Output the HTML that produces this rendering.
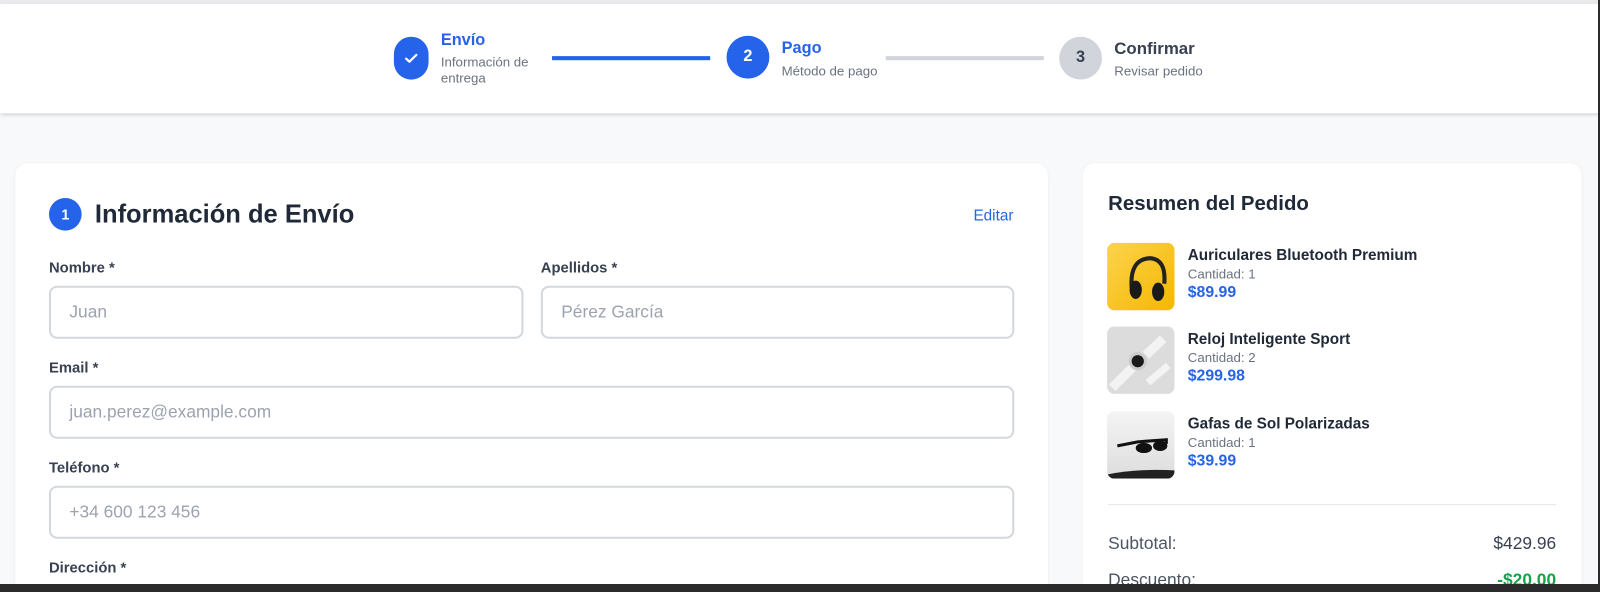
<!DOCTYPE html>
<html><head><meta charset="utf-8"><style>
*{box-sizing:border-box;margin:0;padding:0}
html,body{width:1600px;height:592px;overflow:hidden}
body{background:#f8f9fb;font-family:"Liberation Sans",sans-serif;position:relative;color:#1f2937}
#clip{position:absolute;left:0;top:0;width:1600px;height:592px;overflow:hidden}
#w{position:absolute;left:0;top:0;width:1568px;height:580px;transform:scale(1.0204);transform-origin:0 0;overflow:hidden}
.abs{position:absolute}
.top{left:0;top:0;width:1600px;height:4px;background:#e9eaec}
.hdr{left:0;top:4px;width:1600px;height:107px;background:#fff;box-shadow:0 2px 3px rgba(0,0,0,.12)}
.circ{position:absolute;border-radius:50%;display:flex;align-items:center;justify-content:center;font-weight:bold;font-size:16px}
.st{position:absolute;font-size:16px;font-weight:bold}
.ss{position:absolute;font-size:13px;color:#6b7280;line-height:16px}
.card{background:#fff;border-radius:12px;box-shadow:0 1px 3px rgba(0,0,0,.06)}
.lbl{position:absolute;font-size:14.5px;font-weight:bold;color:#374151}
.inp{position:absolute;height:52px;border:2px solid #d4d7dc;border-radius:8px;font-size:17px;color:#9ca3af;padding-left:18px;line-height:48px}
.img{position:absolute;left:1085px;width:66px;height:66px;border-radius:7px;overflow:hidden}
.nm{position:absolute;left:1164px;font-size:15px;font-weight:bold;color:#1f2937}
.qt{position:absolute;left:1164px;font-size:13px;color:#6b7280}
.pr{position:absolute;left:1164px;font-size:15.5px;font-weight:bold;color:#2563eb}
</style></head><body>
<div id="clip">
<div id="w">
<div class="abs top"></div>
<div class="abs hdr"></div>
<div class="circ" style="left:386px;top:36px;width:34px;height:42px;border-radius:17px;background:#2563eb"><svg width="16" height="16" viewBox="0 0 16 16"><path d="M3 8.5l3.2 3L13 4.8" stroke="#fff" stroke-width="2.2" fill="none" stroke-linecap="round" stroke-linejoin="round"/></svg></div>
<div class="st" style="left:432px;top:31px;color:#2563eb">Envío</div>
<div class="ss" style="left:432px;top:53px">Información de<br>entrega</div>
<div class="abs" style="left:541px;top:55px;width:155px;height:4px;background:#2563eb"></div>
<div class="circ" style="left:712px;top:35px;width:42px;height:42px;background:#2563eb;color:#fff">2</div>
<div class="st" style="left:766px;top:39px;color:#2563eb">Pago</div>
<div class="ss" style="left:766px;top:62px">Método de pago</div>
<div class="abs" style="left:868px;top:55px;width:155px;height:4px;background:#d1d5db"></div>
<div class="circ" style="left:1038px;top:36px;width:42px;height:42px;background:#d1d5db;color:#374151">3</div>
<div class="st" style="left:1092px;top:39px;color:#374151;font-size:16.5px">Confirmar</div>
<div class="ss" style="left:1092px;top:62px">Revisar pedido</div>

<div class="abs card" style="left:15px;top:160px;width:1012px;height:440px"></div>
<div class="circ" style="left:48px;top:194px;width:32px;height:32px;background:#2563eb;color:#fff;font-size:14px">1</div>
<div class="abs" style="left:93px;top:196px;font-size:25px;font-weight:bold;color:#1f2937">Información de Envío</div>
<div class="abs" style="left:954px;top:203px;font-size:15px;color:#2563eb">Editar</div>
<div class="lbl" style="left:48px;top:255px">Nombre *</div>
<div class="lbl" style="left:530px;top:255px">Apellidos *</div>
<div class="inp" style="left:48px;top:280px;width:465px">Juan</div>
<div class="inp" style="left:530px;top:280px;width:464px">Pérez García</div>
<div class="lbl" style="left:48px;top:353px">Email *</div>
<div class="inp" style="left:48px;top:378px;width:946px">juan.perez@example.com</div>
<div class="lbl" style="left:48px;top:451px">Teléfono *</div>
<div class="inp" style="left:48px;top:476px;width:946px">+34 600 123 456</div>
<div class="lbl" style="left:48px;top:549px">Dirección *</div>

<div class="abs card" style="left:1061px;top:160px;width:489px;height:440px"></div>
<div class="abs" style="left:1086px;top:189px;font-size:20px;font-weight:bold;color:#1f2937">Resumen del Pedido</div>
<div class="img" style="top:238px;background:linear-gradient(135deg,#fcd34d,#f5b800)"><svg width="66" height="66" viewBox="0 0 66 66"><path d="M24 44 Q22 16 42 15 Q58 16 56 40" stroke="#222" stroke-width="4" fill="none"/><ellipse cx="28" cy="46" rx="6" ry="9" fill="#1a1a1a"/><ellipse cx="50" cy="48" rx="6" ry="9" fill="#1a1a1a"/></svg></div>
<div class="nm" style="top:242px">Auriculares Bluetooth Premium</div>
<div class="qt" style="top:261px">Cantidad: 1</div>
<div class="pr" style="top:278px">$89.99</div>
<div class="img" style="top:320px;background:#dcdcdc"><svg width="66" height="66" viewBox="0 0 66 66"><path d="M5 60 L25 40 M38 28 L55 12" stroke="#f3f3f3" stroke-width="9"/><path d="M40 55 L60 38" stroke="#f3f3f3" stroke-width="7"/><circle cx="30" cy="34" r="9" fill="#ccc"/><circle cx="30" cy="34" r="6" fill="#1a1a1a"/></svg></div>
<div class="nm" style="top:324px">Reloj Inteligente Sport</div>
<div class="qt" style="top:343px">Cantidad: 2</div>
<div class="pr" style="top:360px">$299.98</div>
<div class="img" style="top:403px;background:linear-gradient(#f4f4f4,#ddd)"><svg width="66" height="66" viewBox="0 0 66 66"><path d="M10 34 L30 30 L58 28 L58 32" stroke="#111" stroke-width="3" fill="none"/><ellipse cx="36" cy="36" rx="8" ry="5" fill="#111"/><ellipse cx="52" cy="34" rx="7" ry="5" fill="#111"/><path d="M0 62 Q30 56 66 58 L66 66 L0 66Z" fill="#222"/></svg></div>
<div class="nm" style="top:407px">Gafas de Sol Polarizadas</div>
<div class="qt" style="top:426px">Cantidad: 1</div>
<div class="pr" style="top:443px">$39.99</div>
<div class="abs" style="left:1086px;top:494px;width:439px;height:1px;background:#e5e7eb"></div>
<div class="abs" style="left:1086px;top:523px;font-size:17px;color:#4b5563">Subtotal:</div>
<div class="abs" style="right:43px;top:523px;font-size:17px;color:#374151">$429.96</div>
<div class="abs" style="left:1086px;top:559px;font-size:17px;color:#4b5563">Descuento:</div>
<div class="abs" style="right:43px;top:559px;font-size:17px;font-weight:bold;color:#16a34a">-$20.00</div>
</div>
<div class="abs" style="left:0;top:584px;width:1600px;height:8px;background:#2b2b2b"></div>
<div class="abs" style="left:1598px;top:0;width:2px;height:592px;background:#2b2b2b"></div>
</div>
</body></html>
